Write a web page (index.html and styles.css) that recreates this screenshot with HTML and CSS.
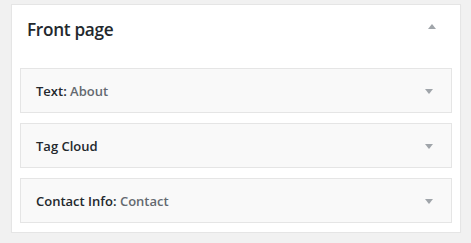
FILE: index.html
```html
<!DOCTYPE html>
<html>
<head>
<meta charset="utf-8">
<link rel="stylesheet" href="styles.css">
</head>
<body>
<div class="panel">
  <div class="panel-head">
    <h3 class="panel-title">Front page</h3>
    <span class="arrow-up"></span>
  </div>
  <div class="widgets">
    <div class="widget"><span class="w-title">Text: <span class="w-in">About</span></span><span class="arrow-down"></span></div>
    <div class="widget"><span class="w-title">Tag Cloud</span><span class="arrow-down"></span></div>
    <div class="widget"><span class="w-title">Contact Info: <span class="w-in">Contact</span></span><span class="arrow-down"></span></div>
  </div>
</div>
</body>
</html>
```
FILE: styles.css
```css
html, body { margin: 0; padding: 0; }
body {
  background: #f1f1f1;
  font-family: "Open Sans", "Liberation Sans", sans-serif;
  padding: 4px 10px 0 11px;
}
.panel {
  width: 432px;
  height: 227px;
  background: #fff;
  border: 1px solid #e5e5e5;
  box-shadow: 0 1px 1px rgba(0,0,0,0.04);
  display: flex;
  flex-direction: column;
  padding: 0 8px;
  box-sizing: content-box;
}
.panel-head {
  height: 63px;
  display: flex;
  align-items: flex-start;
  justify-content: space-between;
}
.panel-title {
  margin: 0;
  padding: 13px 0 0 7px;
  font-size: 17.2px;
  font-weight: 600;
  letter-spacing: -0.3px;
  color: #23282d;
  line-height: 24px;
}
.arrow-up {
  width: 0; height: 0;
  border-left: 4px solid transparent;
  border-right: 4px solid transparent;
  border-bottom: 5px solid #a0a5aa;
  margin: 19px 16px 0 0;
}
.widgets {
  display: flex;
  flex-direction: column;
  gap: 10px;
}
.widget {
  height: 43px;
  background: #f9f9f9;
  border: 1px solid #e5e5e5;
  display: flex;
  align-items: center;
  justify-content: space-between;
  padding: 0 18px 0 15px;
}
.w-title {
  font-size: 13px;
  font-weight: 600;
  color: #23282d;
}
.w-in {
  color: #646970;
}
.arrow-down {
  width: 0; height: 0;
  border-left: 4px solid transparent;
  border-right: 4px solid transparent;
  border-top: 5px solid #a0a5aa;
  margin-top: 2px;
}
```
